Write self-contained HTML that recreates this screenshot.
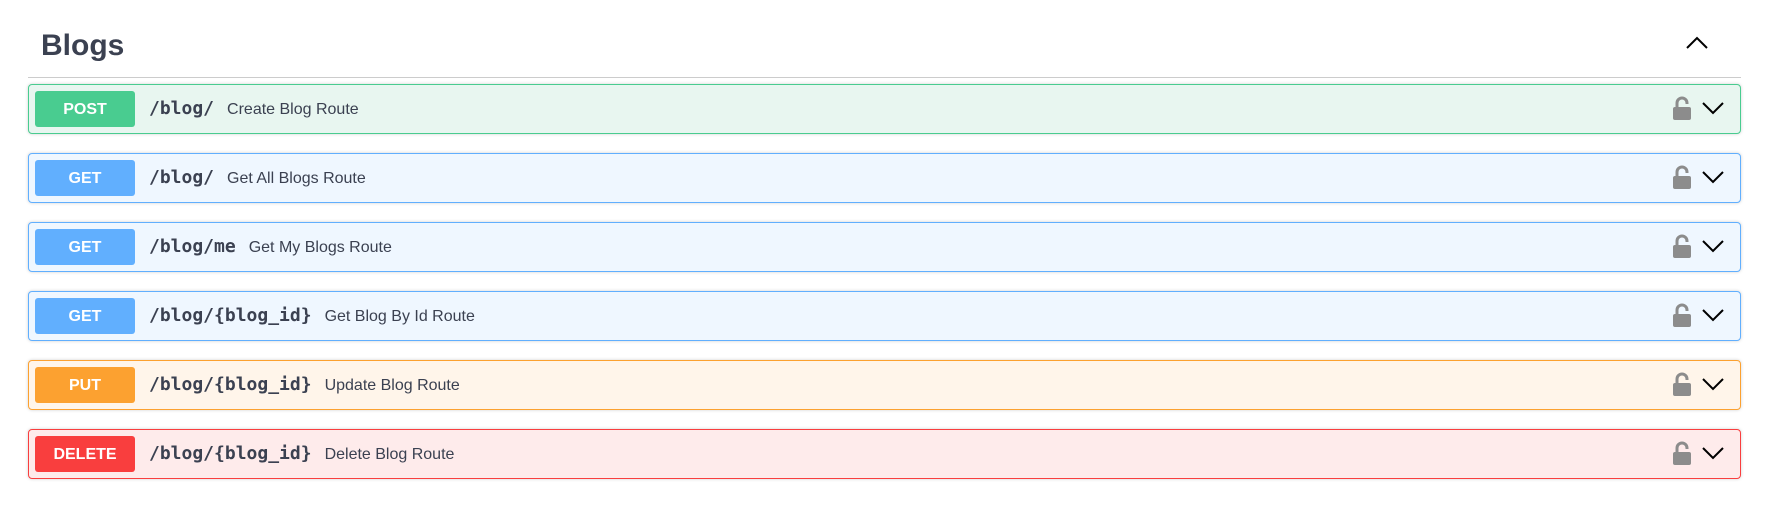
<!DOCTYPE html>
<html><head><style>
body{margin:0;background:#fff;width:1774px;height:514px;overflow:hidden;font-family:"Liberation Sans",sans-serif}
h2{position:absolute;left:41px;top:29px;margin:0;font-size:30px;font-weight:bold;color:#3b4151}
.hl{position:absolute;left:28px;width:1713px;top:77px;height:1px;background:#ccc}
.up{position:absolute;left:1686px;top:36px}
.row{position:absolute;left:28px;width:1711px;height:48px;border:1px solid;border-radius:4px;box-shadow:0 0 3px rgba(0,0,0,.19)}
.b{position:absolute;left:6px;top:6px;width:100px;height:36px;border-radius:3px;color:#fff;font-weight:bold;font-size:16px;line-height:37px;text-align:center}
.p{position:absolute;left:120px;top:13px;font-family:"DejaVu Sans Mono","Liberation Mono",monospace;font-weight:bold;font-size:18px;color:#3b4151}
.d{font-family:"Liberation Sans",sans-serif;font-weight:normal;font-size:16px;margin-left:13px}
.lk{position:absolute;left:1643px;top:10px}
.ch{position:absolute;left:1673px;top:16px}
.post{border-color:#49cc90;background:#e8f6f0}.post .b{background:#49cc90}
.get{border-color:#61affe;background:#eff7ff}.get .b{background:#61affe}
.put{border-color:#fca130;background:#fff5ea}.put .b{background:#fca130}
.del{border-color:#f93e3e;background:#feebeb}.del .b{background:#f93e3e}
</style></head><body>
<h2>Blogs</h2>
<div class="hl"></div>
<svg class="up" width="22" height="14" viewBox="0 0 22 14"><path d="M1 12L11 2L21 12" fill="none" stroke="#000" stroke-width="2"/></svg>

<div class="row post" style="top:84px"><div class="b">POST</div><div class="p">/blog/<span class="d">Create Blog Route</span></div>
<svg class="lk" width="20" height="26" viewBox="0 0 20 26"><path d="M5 12V8a5 5 0 0 1 10 0v1" fill="none" stroke="#8c8c8c" stroke-width="3"/><rect x="1" y="12" width="18" height="13" rx="2" fill="#8c8c8c"/></svg>
<svg class="ch" width="22" height="14" viewBox="0 0 22 14"><path d="M1 2L11 12L21 2" fill="none" stroke="#000" stroke-width="2"/></svg></div>

<div class="row get" style="top:153px"><div class="b">GET</div><div class="p">/blog/<span class="d">Get All Blogs Route</span></div>
<svg class="lk" width="20" height="26" viewBox="0 0 20 26"><path d="M5 12V8a5 5 0 0 1 10 0v1" fill="none" stroke="#8c8c8c" stroke-width="3"/><rect x="1" y="12" width="18" height="13" rx="2" fill="#8c8c8c"/></svg>
<svg class="ch" width="22" height="14" viewBox="0 0 22 14"><path d="M1 2L11 12L21 2" fill="none" stroke="#000" stroke-width="2"/></svg></div>

<div class="row get" style="top:222px"><div class="b">GET</div><div class="p">/blog/me<span class="d">Get My Blogs Route</span></div>
<svg class="lk" width="20" height="26" viewBox="0 0 20 26"><path d="M5 12V8a5 5 0 0 1 10 0v1" fill="none" stroke="#8c8c8c" stroke-width="3"/><rect x="1" y="12" width="18" height="13" rx="2" fill="#8c8c8c"/></svg>
<svg class="ch" width="22" height="14" viewBox="0 0 22 14"><path d="M1 2L11 12L21 2" fill="none" stroke="#000" stroke-width="2"/></svg></div>

<div class="row get" style="top:291px"><div class="b">GET</div><div class="p">/blog/{blog_id}<span class="d">Get Blog By Id Route</span></div>
<svg class="lk" width="20" height="26" viewBox="0 0 20 26"><path d="M5 12V8a5 5 0 0 1 10 0v1" fill="none" stroke="#8c8c8c" stroke-width="3"/><rect x="1" y="12" width="18" height="13" rx="2" fill="#8c8c8c"/></svg>
<svg class="ch" width="22" height="14" viewBox="0 0 22 14"><path d="M1 2L11 12L21 2" fill="none" stroke="#000" stroke-width="2"/></svg></div>

<div class="row put" style="top:360px"><div class="b">PUT</div><div class="p">/blog/{blog_id}<span class="d">Update Blog Route</span></div>
<svg class="lk" width="20" height="26" viewBox="0 0 20 26"><path d="M5 12V8a5 5 0 0 1 10 0v1" fill="none" stroke="#8c8c8c" stroke-width="3"/><rect x="1" y="12" width="18" height="13" rx="2" fill="#8c8c8c"/></svg>
<svg class="ch" width="22" height="14" viewBox="0 0 22 14"><path d="M1 2L11 12L21 2" fill="none" stroke="#000" stroke-width="2"/></svg></div>

<div class="row del" style="top:429px"><div class="b">DELETE</div><div class="p">/blog/{blog_id}<span class="d">Delete Blog Route</span></div>
<svg class="lk" width="20" height="26" viewBox="0 0 20 26"><path d="M5 12V8a5 5 0 0 1 10 0v1" fill="none" stroke="#8c8c8c" stroke-width="3"/><rect x="1" y="12" width="18" height="13" rx="2" fill="#8c8c8c"/></svg>
<svg class="ch" width="22" height="14" viewBox="0 0 22 14"><path d="M1 2L11 12L21 2" fill="none" stroke="#000" stroke-width="2"/></svg></div>
</body></html>
